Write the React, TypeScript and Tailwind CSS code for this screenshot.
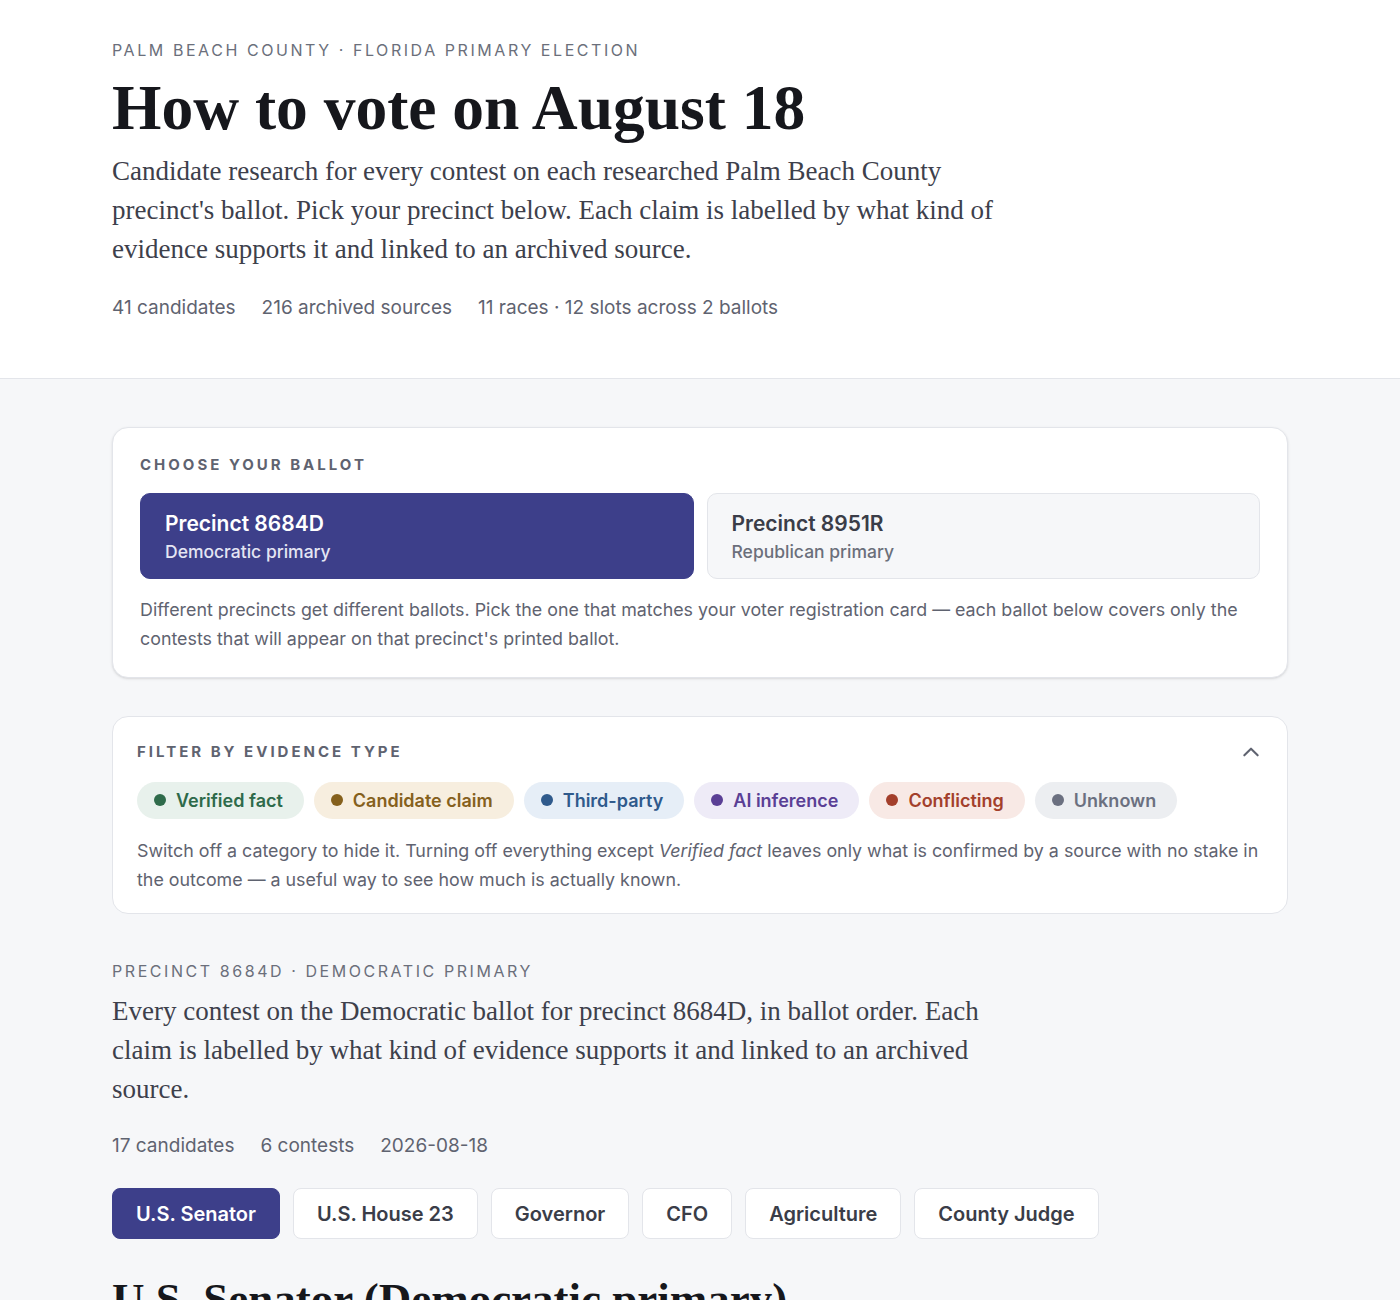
import { useState } from 'react';

const SERIF = 'font-["Liberation_Serif",serif]';

const BALLOTS = [
  { id: '8684D', title: 'Precinct 8684D', sub: 'Democratic primary' },
  { id: '8951R', title: 'Precinct 8951R', sub: 'Republican primary' },
] as const;

const EVIDENCE = [
  { id: 'verified', label: 'Verified fact', chip: 'bg-[#e8f1ec] text-[#2e6a4a]', dot: 'bg-[#2f6b4b]' },
  { id: 'claim', label: 'Candidate claim', chip: 'bg-[#f7eedf] text-[#85601c]', dot: 'bg-[#85601c]' },
  { id: 'third', label: 'Third-party', chip: 'bg-[#e6eef7] text-[#2f5a8c]', dot: 'bg-[#2f5a8c]' },
  { id: 'ai', label: 'AI inference', chip: 'bg-[#eeebf7] text-[#5a3f95]', dot: 'bg-[#5a3f95]' },
  { id: 'conflict', label: 'Conflicting', chip: 'bg-[#f8e9e5] text-[#a33f2b]', dot: 'bg-[#a33f2b]' },
  { id: 'unknown', label: 'Unknown', chip: 'bg-[#eceef1] text-[#6b7080]', dot: 'bg-[#6b7080]' },
];

const CONTESTS = ['U.S. Senator', 'U.S. House 23', 'Governor', 'CFO', 'Agriculture', 'County Judge'];

export default function App() {
  const [ballot, setBallot] = useState<string>('8684D');
  const [contest, setContest] = useState('U.S. Senator');

  return (
    <div className='min-h-screen bg-[#f6f7f9] font-["Inter",sans-serif] text-[#1a1b22]'>
      {/* Header */}
      <header className="bg-white border-b border-[#e3e5ea]">
        <div className="max-w-[1176px] mx-auto pt-[38px] pb-[55px]">
          <p className="text-[16px] tracking-[0.16em] text-[#6b6f7b] uppercase">
            Palm Beach County · Florida Primary Election
          </p>
          <h1 className={`${SERIF} mt-[10px] text-[63.5px] leading-[72px] font-bold text-[#16171c]`}>
            How to vote on August 18
          </h1>
          <p className={`${SERIF} mt-[8px] max-w-[890px] text-[27px] leading-[39px] text-[#3d404b]`}>
            Candidate research for every contest on each researched Palm Beach County precinct's ballot.
            Pick your precinct below. Each claim is labelled by what kind of evidence supports it and
            linked to an archived source.
          </p>
          <div className="mt-[25px] flex gap-[26px] text-[19px] text-[#5f6370]">
            <span>41 candidates</span>
            <span>216 archived sources</span>
            <span>11 races · 12 slots across 2 ballots</span>
          </div>
        </div>
      </header>

      <main className="max-w-[1176px] mx-auto pt-[48px] pb-10">
        {/* Ballot picker */}
        <section className="bg-white rounded-2xl border border-[#e3e5ea] shadow-sm px-[27px] pt-[26px] pb-[24px]">
          <h2 className="text-[15px] font-bold tracking-[0.2em] text-[#5f6370] uppercase">Choose your ballot</h2>
          <div className="mt-[17px] grid grid-cols-2 gap-[13px]">
            {BALLOTS.map((b) => {
              const active = ballot === b.id;
              return (
                <button
                  key={b.id}
                  onClick={() => setBallot(b.id)}
                  className={`text-left rounded-[10px] border px-[24px] h-[86px] flex flex-col justify-center ${
                    active ? 'bg-[#3d3f8a] border-[#3d3f8a] text-white' : 'bg-[#f6f7f9] border-[#e3e5ea] text-[#3a3d48]'
                  }`}
                >
                  <span className="text-[21px] font-semibold leading-[29px]">{b.title}</span>
                  <span className={`mt-[1px] text-[17.5px] font-medium leading-[25px] ${active ? 'text-[#e4e5f3]' : 'text-[#6b6f7b]'}`}>
                    {b.sub}
                  </span>
                </button>
              );
            })}
          </div>
          <p className="mt-[16px] text-[17.85px] leading-[29px] text-[#5f6370]">
            Different precincts get different ballots. Pick the one that matches your voter registration card — each
            ballot below covers only the contests that will appear on that precinct's printed ballot.
          </p>
        </section>

        {/* Evidence filter */}
        <section className="mt-[38px] bg-white rounded-2xl border border-[#e3e5ea] px-[24px] pt-[24px] pb-[19px]">
          <div className="flex items-center justify-between">
            <h2 className="text-[15px] font-bold tracking-[0.2em] text-[#5f6370] uppercase">Filter by evidence type</h2>
            <svg width="20" height="20" viewBox="0 0 24 24" fill="none" stroke="#5f6370" strokeWidth="2.5" strokeLinecap="round" strokeLinejoin="round" className="mr-[2px]">
              <path d="M4 16l8-8 8 8" />
            </svg>
          </div>
          <div className="mt-[18px] flex flex-wrap gap-[10px]">
            {EVIDENCE.map((e) => (
              <button key={e.id} className={`h-[37px] rounded-full pl-[17px] pr-[21px] flex items-center gap-[10px] text-[18px] font-semibold ${e.chip}`}>
                <span className={`w-[12px] h-[12px] rounded-full ${e.dot}`} />
                {e.label}
              </button>
            ))}
          </div>
          <p className="mt-[17px] text-[17.85px] leading-[29px] text-[#5f6370]">
            Switch off a category to hide it. Turning off everything except <em>Verified fact</em> leaves only what is
            confirmed by a source with no stake in the outcome — a useful way to see how much is actually known.
          </p>
        </section>

        {/* Precinct section */}
        <section className="mt-[45px]">
          <p className="text-[16px] tracking-[0.16em] text-[#6b6f7b] uppercase">Precinct 8684D · Democratic primary</p>
          <p className={`${SERIF} mt-[9px] max-w-[890px] text-[27px] leading-[39px] text-[#3d404b]`}>
            Every contest on the Democratic ballot for precinct 8684D, in ballot order. Each claim is labelled by
            what kind of evidence supports it and linked to an archived source.
          </p>
          <div className="mt-[23px] flex gap-[26px] text-[19px] text-[#5f6370]">
            <span>17 candidates</span>
            <span>6 contests</span>
            <span>2026-08-18</span>
          </div>
          <div className="mt-[28px] flex flex-wrap gap-[13px]">
            {CONTESTS.map((c) => {
              const active = contest === c;
              return (
                <button
                  key={c}
                  onClick={() => setContest(c)}
                  className={`h-[51px] px-[23px] rounded-[8px] border text-[20px] font-semibold ${
                    active ? 'bg-[#3d3f8a] border-[#3d3f8a] text-white' : 'bg-white border-[#e3e5ea] text-[#3a3d48]'
                  }`}
                >
                  {c}
                </button>
              );
            })}
          </div>
          <h2 className={`${SERIF} mt-[34px] text-[45px] leading-[52px] font-bold text-[#16171c]`}>
            {contest} (Democratic primary)
          </h2>
        </section>
      </main>
    </div>
  );
}
